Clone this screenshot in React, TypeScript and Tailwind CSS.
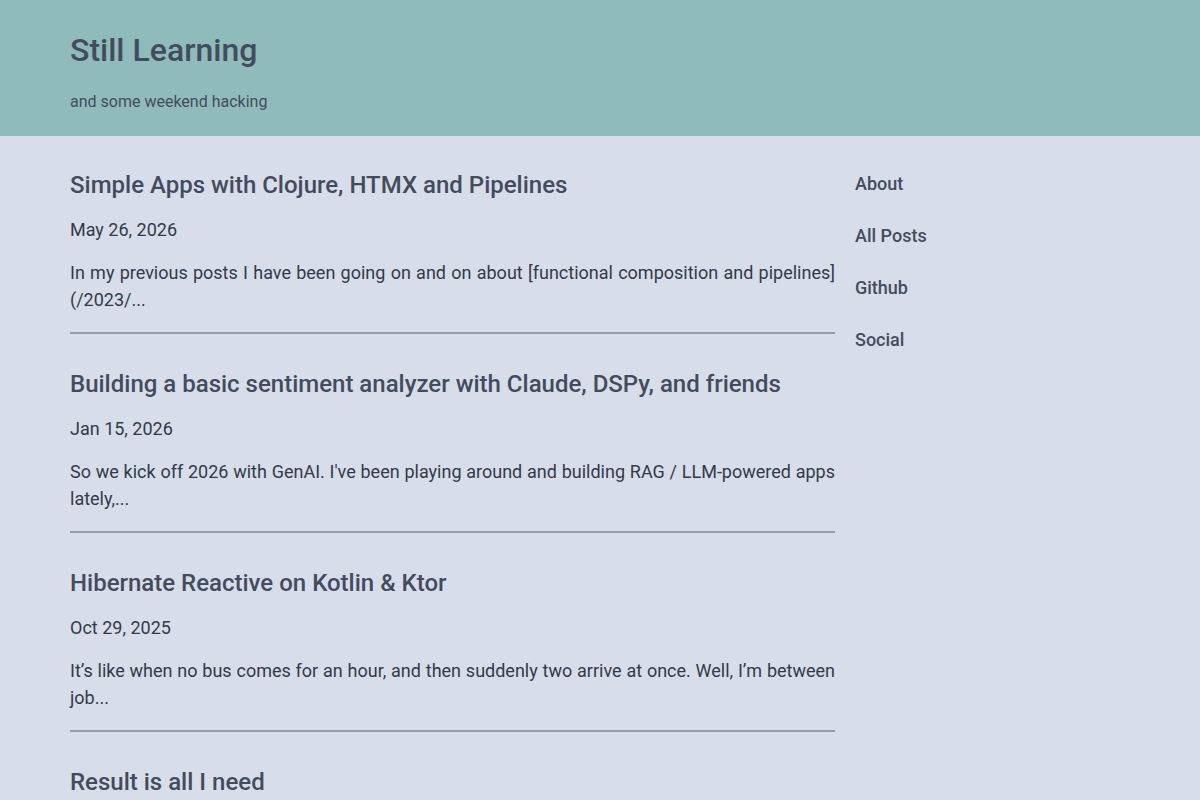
const posts = [
  {
    title: "Simple Apps with Clojure, HTMX and Pipelines",
    date: "May 26, 2026",
    excerpt:
      "In my previous posts I have been going on and on about [functional composition and pipelines](/2023/...",
  },
  {
    title: "Building a basic sentiment analyzer with Claude, DSPy, and friends",
    date: "Jan 15, 2026",
    excerpt:
      "So we kick off 2026 with GenAI. I've been playing around and building RAG / LLM-powered apps lately,...",
  },
  {
    title: "Hibernate Reactive on Kotlin & Ktor",
    date: "Oct 29, 2025",
    excerpt:
      "It\u2019s like when no bus comes for an hour, and then suddenly two arrive at once. Well, I\u2019m between job...",
  },
  {
    title: "Result is all I need",
    date: "Sep 12, 2025",
    excerpt: "A short note on error handling without exceptions...",
  },
];

const links = ["About", "All Posts", "Github", "Social"];

const heading = "font-['Roboto',sans-serif] font-medium text-[#434c5e]";

export default function App() {
  return (
    <div className="min-h-screen bg-[#d8dee9] font-['Roboto',sans-serif] text-[#323a49]">
      <header className="h-[136px] bg-[#8fbcbb] px-[70px] pt-[30px]">
        <h1 className={`${heading} text-[32px] leading-[40px]`}>Still Learning</h1>
        <p className="mt-[21px] text-[16px] leading-[22px] text-[#434c5e]">and some weekend hacking</p>
      </header>
      <div className="flex gap-5 px-[70px] pt-[33px]">
        <main className="w-[765px] shrink-0">
          {posts.map((p, i) => (
            <article key={i} className="mb-[34px]">
              <h2 className={`${heading} text-[24px] leading-[32px]`}>{p.title}</h2>
              <div className="mt-[17px] text-[18px] leading-[24px]">{p.date}</div>
              <p className="mt-[17px] text-justify text-[18px] leading-[27px]">{p.excerpt}</p>
              <hr className="mt-[19px] border-0 border-t-2 border-[#929eab]" />
            </article>
          ))}
        </main>
        <nav className="flex flex-col gap-[28px] pt-[3px]">
          {links.map((l) => (
            <a key={l} href="#" className={`${heading} text-[18px] leading-[24px]`}>
              {l}
            </a>
          ))}
        </nav>
      </div>
    </div>
  );
}
